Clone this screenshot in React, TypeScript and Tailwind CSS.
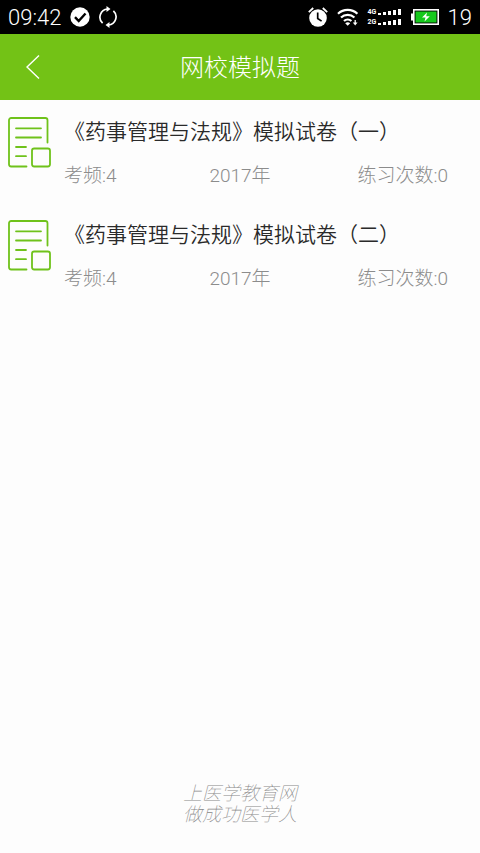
import React from "react";

type Paper = { id: number; title: string; frequency: number; year: string; practiced: number };

const papers: Paper[] = [
  { id: 1, title: "《药事管理与法规》模拟试卷（一）", frequency: 4, year: "2017年", practiced: 0 },
  { id: 2, title: "《药事管理与法规》模拟试卷（二）", frequency: 4, year: "2017年", practiced: 0 },
];

function CheckIcon() {
  return (
    <svg className="h-5 w-5" viewBox="0 0 20 20" aria-hidden="true">
      <circle cx="10" cy="10" r="9.7" fill="#fff" />
      <path d="M5 10.2 8.7 14 15.5 6.5" fill="none" stroke="#000" strokeWidth="2.4" />
    </svg>
  );
}

function SyncIcon() {
  return (
    <svg className="h-[22px] w-5" viewBox="0 0 20 22" fill="none" stroke="#fff" strokeWidth="1.7" aria-hidden="true">
      <path d="M4.6 17.2A8.2 8.2 0 0 1 9.5 3" />
      <path d="M15.4 4.8A8.2 8.2 0 0 1 10.5 19" />
      <path d="M8.5 0v6l4-3zM11.5 16v6l-4-3z" fill="#fff" stroke="none" />
    </svg>
  );
}

function AlarmIcon() {
  return (
    <svg className="h-5 w-5" viewBox="0 0 20 20" aria-hidden="true">
      <circle cx="10" cy="11" r="8.8" fill="#fff" />
      <path d="M.8 5.2 5.2 1M19.2 5.2 14.8 1" stroke="#fff" strokeWidth="1.8" />
      <path d="M9.7 5.5v6l3.9 2.6" fill="none" stroke="#000" strokeWidth="1.7" />
    </svg>
  );
}

function WifiIcon() {
  return (
    <svg className="h-[18px] w-[22px]" viewBox="0 0 22 18" fill="none" stroke="#fff" strokeWidth="2.2" aria-hidden="true">
      <path d="M1 5.8a14 14 0 0 1 19.4 0M4 9.5a9.6 9.6 0 0 1 13.4 0M7 13a5.4 5.4 0 0 1 7.4 0" />
      <path d="m8.2 15.2 2.5 2.6 2.5-2.6a4 4 0 0 0-5 0z" fill="#fff" stroke="none" />
      <path d="M18.2 12v3" strokeWidth="1.3" />
      <path d="M15.8 14.6h4.8L18.2 17.4z" fill="#fff" stroke="none" />
    </svg>
  );
}

function SignalRow({ label }: { label: string }) {
  return (
    <div className="flex h-2 items-end gap-[2px]">
      <span className="w-2 text-[7px] leading-[8px] font-bold">{label}</span>
      <svg className="h-2 w-6" viewBox="0 0 24 8" fill="#fff" aria-hidden="true">
        <path d="M0 5h3v2H0zM5 4h3v3H5zM10 3h3v4h-3zM15 2h3v5h-3zM20 1h3v6h-3z" />
      </svg>
    </div>
  );
}

function BatteryIcon() {
  return (
    <svg className="h-4 w-7" viewBox="0 0 28 16" aria-hidden="true">
      <path d="M0 4.5h2v7H0z" fill="#fff" />
      <rect x="2.8" y=".8" width="24.4" height="14.4" fill="none" stroke="#fff" strokeWidth="1.6" />
      <rect x="4.5" y="2.5" width="21" height="11" fill="#16c91c" />
      <path d="m16 3.5-5 5h3.5l-1 4 5.3-5.3h-3.6z" fill="#fff" />
    </svg>
  );
}

function PaperIcon() {
  return (
    <svg className="h-[52px] w-11 shrink-0" viewBox="0 0 44 52" fill="none" stroke="#6fc21b" strokeWidth="1.8" strokeLinecap="round" aria-hidden="true">
      <path d="M18.5 50.5H3.2A2.2 2.2 0 0 1 1 48.3V4.2A2.2 2.2 0 0 1 3.2 2H37.3A2.2 2.2 0 0 1 39.5 4.2V26.5" />
      <path d="M8 12.3h25M8 21.5h25M8 31h10M8 40.2h10" />
      <rect x="24" y="32.5" width="18" height="18" rx="2.2" />
    </svg>
  );
}

export default function App() {
  return (
    <div className="flex min-h-screen flex-col bg-[#fdfdfd] font-[Roboto,'Noto_Sans_CJK_SC',sans-serif] font-light">
      <div className="flex h-[34px] items-center justify-between bg-black px-2 text-white">
        <div className="flex items-center gap-2">
          <span className="w-[54px] pt-[2px] text-[22px] leading-8">09:42</span>
          <CheckIcon />
          <SyncIcon />
        </div>
        <div className="flex items-center gap-[9px]">
          <AlarmIcon />
          <WifiIcon />
          <div className="flex flex-col gap-[2px]">
            <SignalRow label="4G" />
            <SignalRow label="2G" />
          </div>
          <BatteryIcon />
          <span className="pt-[2px] text-[22px] leading-8">19</span>
        </div>
      </div>

      <header className="grid h-[66px] grid-cols-[66px_1fr_66px] items-center bg-[#73c216] text-white">
        <button type="button" aria-label="返回" className="flex h-full items-center justify-center">
          <svg className="h-6 w-[14px]" viewBox="0 0 14 24" fill="none" stroke="#fff" strokeWidth="1.4" aria-hidden="true">
            <path d="M13 .5 1 12l12 11.5" />
          </svg>
        </button>
        <h1 className="pt-[2px] text-center text-2xl font-light">网校模拟题</h1>
      </header>

      <main className="grow">
        <ul>
          {papers.map((paper) => (
            <li key={paper.id} className="flex h-[103px] gap-3 pt-4 pr-8 pl-2">
              <PaperIcon />
              <div className="min-w-0 grow">
                <h2 className="text-[21px] leading-8 font-[350] text-[#2a2a2a]">{paper.title}</h2>
                <div className="mt-3 grid grid-cols-[4fr_3fr_5fr] text-[19px] leading-8 text-[#8c8c8c]">
                  <span>考频:{paper.frequency}</span>
                  <span className="text-center">{paper.year}</span>
                  <span className="text-right whitespace-nowrap">练习次数:{paper.practiced}</span>
                </div>
              </div>
            </li>
          ))}
        </ul>
      </main>

      <footer className="pb-7 text-center text-[19px] leading-[21px] font-thin text-[#888] italic">
        <p>上医学教育网</p>
        <p>做成功医学人</p>
      </footer>
    </div>
  );
}
